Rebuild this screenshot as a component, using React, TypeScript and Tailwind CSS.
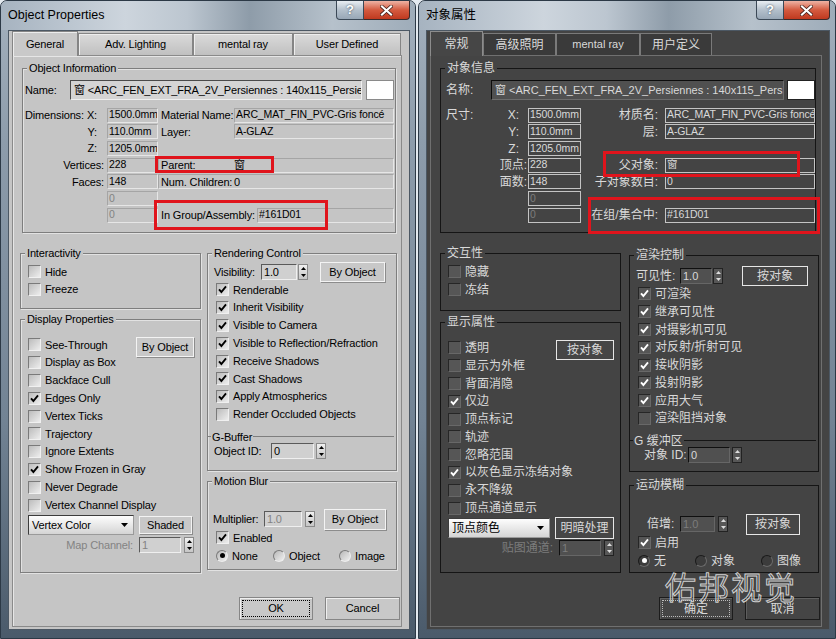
import React from "react";

const FONT = "font-['Liberation_Sans','Noto_Sans_CJK_SC',sans-serif]";

const LIGHT = {
  dark: false,
  winW: "w-[416px]",
  client: "bg-[#c5c5c5] text-[#000000] text-[11px] tracking-[-0.15px]",
  bg: "bg-[#c5c5c5]",
  dim: "text-[#838383]",
  group: "border border-[#7e7e7e] shadow-[inset_1px_1px_0_#e2e2e2,1px_1px_0_#e2e2e2]",
  line: "bg-[#7e7e7e]",
  panel: "border border-[#8a8a8a] shadow-[inset_1px_1px_0_#e6e6e6]",
  tabOn: "h-[25px] bg-[#c9c9c9] border border-b-0 border-[#858585] shadow-[inset_1px_1px_0_#ededed]",
  tabOff: "h-[22px] bg-[linear-gradient(#dadada,#c0c0c0)] border border-b-0 border-[#858585] shadow-[inset_1px_1px_0_#ededed]",
  info: "border border-[#e6e6e6] border-t-[#a5a5a5] border-l-[#a5a5a5]",
  name: "w-[292px] bg-[#d4d4d4] border border-[#4a4a4a] border-b-[#efefef] border-r-[#efefef]",
  nameLabel: "w-[47px] pl-[2px]",
  swatch: "ml-[4px] bg-[#ffffff] border border-[#8a8a8a]",
  c1: "w-[84px] pl-[2px]",
  axPad: "pr-[10px]",
  cntPad: "pr-[3px]",
  box: "bg-[linear-gradient(135deg,#bcbcbc,#ededed)] border border-[#7a7a7a] border-b-[#f0f0f0] border-r-[#f0f0f0]",
  mark: "#000000",
  radio: "bg-[linear-gradient(135deg,#b8b8b8,#f0f0f0)] border border-[#7a7a7a] border-b-[#eeeeee] border-r-[#eeeeee]",
  dot: "bg-[#000000]",
  btn: "bg-[#c8c8c8] border border-[#f3f3f3] shadow-[1px_1px_0_#8c8c8c]",
  spin: "bg-[#d0d0d0] border border-[#5a5a5a] border-b-[#efefef] border-r-[#efefef]",
  arrows: "bg-[linear-gradient(#f0f0f0,#c6c6c6)] border border-[#8a8a8a]",
  arrowColor: "#000000",
  big: "bg-[#c8c8c8] border border-[#868686] shadow-[inset_1px_1px_0_#efefef]",
  focus: "outline outline-1 outline-dotted outline-offset-[-4px] outline-[#000000]",
  red1: "left-[132px] top-[87px] w-[119px] h-[17px]",
  red2: "left-[131px] top-[131px] w-[174px] h-[30px]",
  colL: "ml-[7px]",
  colR: "ml-[6px]",
  interH: "h-[56px]",
  dispBox: "mt-[10px] h-[254px]",
  renderBox: "h-[218px] pt-[9px]",
  blurBox: "mt-[10px] h-[89px] pt-[27px]",
  shaded: "w-[53px] h-[18px]",
  visLabel: "w-[47px]",
  visField: "w-[36px]",
  visBtn: "ml-[12px] w-[65px]",
  idRow: "pl-[6px]",
  idLabel: "w-[57px]",
  idField: "w-[43px]",
  multRow: "pl-[5px]",
  multLabel: "w-[51px]",
  multField: "w-[38px]",
  multBtn: "ml-[9px] w-[62px]",
};

type Theme = typeof LIGHT;

const DARK: Theme = {
  dark: true,
  winW: "w-[418px]",
  client: "bg-[#444444] text-[#d9d9d9] text-[12px]",
  bg: "bg-[#444444]",
  dim: "text-[#7c7c7c]",
  group: "border border-[#151515]",
  line: "bg-[#151515]",
  panel: "border border-[#707070]",
  tabOn: "h-[25px] bg-[#464646] border border-b-0 border-[#8c8c8c]",
  tabOff: "h-[22px] bg-[#3a3a3a] border border-b-0 border-[#7a7a7a]",
  info: "border border-[#c4c4c4]",
  name: "w-[293px] bg-[#505050] border border-[#0c0c0c] border-b-[#6c6c6c] border-r-[#6c6c6c]",
  nameLabel: "w-[50px] pl-[5px]",
  swatch: "ml-[3px] bg-[#ffffff] border border-[#222222]",
  c1: "w-[87px] pl-[5px]",
  axPad: "pr-[9px]",
  cntPad: "pr-[1px]",
  box: "bg-[#565656] border border-[#262626] border-b-[#686868] border-r-[#686868]",
  mark: "#ffffff",
  radio: "bg-[#3c3c3c] border border-[#1a1a1a] border-b-[#6a6a6a] border-r-[#6a6a6a]",
  dot: "bg-[#ffffff]",
  btn: "bg-[#464646] border border-[#e6e6e6]",
  spin: "bg-[#505050] border border-[#101010] border-b-[#666666] border-r-[#666666]",
  arrows: "bg-[#575757] border border-[#222222]",
  arrowColor: "#dddddd",
  big: "bg-[#454545] border border-[#1c1c1c] shadow-[inset_1px_1px_0_#5e5e5e]",
  focus: "outline outline-1 outline-dotted outline-offset-[-4px] outline-[#bbbbbb]",
  red1: "left-[162px] top-[82px] w-[197px] h-[26px]",
  red2: "left-[147px] top-[128px] w-[232px] h-[37px]",
  colL: "ml-[9px]",
  colR: "ml-[8px]",
  interH: "h-[58px]",
  dispBox: "mt-[11px] h-[251px]",
  renderBox: "mt-[2px] h-[217px] pt-[11px]",
  blurBox: "mt-[13px] h-[88px] pt-[28px]",
  shaded: "w-[59px] h-[22px]",
  visLabel: "w-[44px]",
  visField: "w-[32px]",
  visBtn: "ml-[19px] w-[66px]",
  idRow: "pl-[14px]",
  idLabel: "w-[44px]",
  idField: "w-[42px]",
  multRow: "pl-[17px]",
  multLabel: "w-[33px]",
  multField: "w-[35px]",
  multBtn: "ml-[18px] w-[54px]",
};

const EN = {
  title: "Object Properties",
  tabs: [
    { label: "General", w: "w-[66px]" },
    { label: "Adv. Lighting", w: "w-[115px]" },
    { label: "mental ray", w: "w-[100px]" },
    { label: "User Defined", w: "w-[108px]" },
  ],
  info: "Object Information",
  name: "Name:",
  dims: "Dimensions:",
  mat: "Material Name:",
  layer: "Layer:",
  verts: "Vertices:",
  faces: "Faces:",
  parent: "Parent:",
  kids: "Num. Children:",
  group: "In Group/Assembly:",
  inter: "Interactivity",
  hide: "Hide",
  freeze: "Freeze",
  disp: "Display Properties",
  dispItems: ["See-Through", "Display as Box", "Backface Cull", "Edges Only", "Vertex Ticks", "Trajectory", "Ignore Extents", "Show Frozen in Gray", "Never Degrade", "Vertex Channel Display"],
  byObj: "By Object",
  vc: "Vertex Color",
  shaded: "Shaded",
  mapCh: "Map Channel:",
  render: "Rendering Control",
  vis: "Visibility:",
  renderItems: ["Renderable", "Inherit Visibility", "Visible to Camera", "Visible to Reflection/Refraction", "Receive Shadows", "Cast Shadows", "Apply Atmospherics", "Render Occluded Objects"],
  gbuf: "G-Buffer",
  objId: "Object ID:",
  mblur: "Motion Blur",
  mult: "Multiplier:",
  enabled: "Enabled",
  radios: ["None", "Object", "Image"],
  ok: "OK",
  cancel: "Cancel",
};

type Strings = typeof EN;

const CN: Strings = {
  title: "对象属性",
  tabs: [
    { label: "常规", w: "w-[53px]" },
    { label: "高级照明", w: "w-[73px]" },
    { label: "mental ray", w: "w-[84px]" },
    { label: "用户定义", w: "w-[72px]" },
  ],
  info: "对象信息",
  name: "名称:",
  dims: "尺寸:",
  mat: "材质名:",
  layer: "层:",
  verts: "顶点:",
  faces: "面数:",
  parent: "父对象:",
  kids: "子对象数目:",
  group: "在组/集合中:",
  inter: "交互性",
  hide: "隐藏",
  freeze: "冻结",
  disp: "显示属性",
  dispItems: ["透明", "显示为外框", "背面消隐", "仅边", "顶点标记", "轨迹", "忽略范围", "以灰色显示冻结对象", "永不降级", "顶点通道显示"],
  byObj: "按对象",
  vc: "顶点颜色",
  shaded: "明暗处理",
  mapCh: "贴图通道:",
  render: "渲染控制",
  vis: "可见性:",
  renderItems: ["可渲染", "继承可见性", "对摄影机可见", "对反射/折射可见", "接收阴影", "投射阴影", "应用大气", "渲染阻挡对象"],
  gbuf: "G 缓冲区",
  objId: "对象 ID:",
  mblur: "运动模糊",
  mult: "倍增:",
  enabled: "启用",
  radios: ["无", "对象", "图像"],
  ok: "确定",
  cancel: "取消",
};

const DISP_ON = [false, false, false, true, false, false, false, true, false, false];
const RENDER_ON = [true, true, true, true, true, true, true, false];

function Group({ t, label, cls, children }: { t: Theme; label: string; cls: string; children?: React.ReactNode }) {
  return (
    <div className={`relative ${t.group} ${cls}`}>
      <span className={`absolute left-[4px] top-[-8px] px-[2px] leading-[14px] whitespace-nowrap ${t.bg}`}>{label}</span>
      {children}
    </div>
  );
}

function Check({ t, on, label }: { t: Theme; on?: boolean; label: string }) {
  return (
    <div className="flex items-center h-[17.8px]">
      <span className={`w-[13px] h-[13px] shrink-0 flex items-center justify-center ${t.box}`}>
        {on && (
          <svg width="9" height="9" viewBox="0 0 9 9">
            <path d="M1 4.3 3.4 7 8 1.4" fill="none" stroke={t.mark} strokeWidth="1.9" />
          </svg>
        )}
      </span>
      <span className="ml-[4px] whitespace-nowrap">{label}</span>
    </div>
  );
}

function Radio({ t, on, label, w }: { t: Theme; on?: boolean; label: string; w?: string }) {
  return (
    <div className={`flex items-center ${w ?? ""}`}>
      <span className={`w-[12px] h-[12px] rounded-full shrink-0 flex items-center justify-center ${t.radio}`}>
        {on && <span className={`w-[5px] h-[5px] rounded-full ${t.dot}`} />}
      </span>
      <span className="ml-[4px] whitespace-nowrap">{label}</span>
    </div>
  );
}

function Btn({ t, cls, children }: { t: Theme; cls: string; children: React.ReactNode }) {
  return <div className={`flex items-center justify-center shrink-0 whitespace-nowrap ${t.btn} ${cls}`}>{children}</div>;
}

function Spinner({ t, value, w, gap, disabled }: { t: Theme; value: string; w: string; gap: string; disabled?: boolean }) {
  return (
    <div className="flex items-center">
      <div className={`h-[16px] ${w} flex items-center px-[2px] text-[11px] ${t.spin} ${disabled ? t.dim : ""}`}>{value}</div>
      <div className={`${gap} w-[10px] h-[16px] flex flex-col items-center justify-around ${t.arrows}`}>
        <svg width="5" height="3" viewBox="0 0 5 3">
          <path d="M2.5 0 5 3H0z" fill={t.arrowColor} />
        </svg>
        <svg width="5" height="3" viewBox="0 0 5 3">
          <path d="M0 0h5L2.5 3z" fill={t.arrowColor} />
        </svg>
      </div>
    </div>
  );
}

function Field({ t, w, dim, children }: { t: Theme; w: string; dim?: boolean; children?: React.ReactNode }) {
  return (
    <div className={`${w} h-[15px] shrink-0 flex items-center pl-[1px] text-[10.5px] tracking-[-0.1px] whitespace-nowrap overflow-hidden ${t.info} ${dim ? t.dim : ""}`}>
      {children}
    </div>
  );
}

type Row = { ax?: string; cnt?: boolean; v: string; dim?: boolean; l2?: string; v2?: string; kind?: "wide" | "grp" };

function InfoRows({ t, s }: { t: Theme; s: Strings }) {
  const rows: Row[] = [
    { ax: "X:", v: "1500.0mm", l2: s.mat, v2: "ARC_MAT_FIN_PVC-Gris foncé" },
    { ax: "Y:", v: "110.0mm", l2: s.layer, v2: "A-GLAZ" },
    { ax: "Z:", v: "1205.0mm" },
    { ax: s.verts, cnt: true, v: "228", l2: s.parent, v2: "窗", kind: "wide" },
    { ax: s.faces, cnt: true, v: "148", l2: s.kids, v2: "0", kind: "wide" },
    { v: "0", dim: true },
    { v: "0", dim: true, l2: s.group, v2: "#161D01", kind: "grp" },
  ];
  return (
    <div className="mt-[7px]">
      {rows.map((r, i) => (
        <div key={i} className="flex items-center h-[16.67px]">
          <div className={`${t.c1} ${r.cnt ? t.cntPad : t.axPad} h-full flex items-center justify-between whitespace-nowrap`}>
            <span>{i === 0 ? s.dims : ""}</span>
            <span>{r.ax ?? ""}</span>
          </div>
          <Field t={t} w={t.dark ? "w-[53px]" : "w-[51px]"} dim={r.dim}>
            {r.v}
          </Field>
          {r.l2 && !t.dark && r.kind === "wide" && (
            <div className={`w-[236px] h-[15px] flex items-center ${t.info}`}>
              <span className="w-[75px] pl-[2px] whitespace-nowrap">{r.l2}</span>
              <span className="text-[11px]">{r.v2}</span>
            </div>
          )}
          {r.l2 && !t.dark && r.kind === "grp" && (
            <>
              <span className="w-[99px] pl-[3px] whitespace-nowrap">{r.l2}</span>
              <Field t={t} w="w-[137px]">{r.v2}</Field>
            </>
          )}
          {r.l2 && !t.dark && !r.kind && (
            <>
              <span className="w-[76px] pl-[3px] whitespace-nowrap">{r.l2}</span>
              <Field t={t} w="w-[160px]">{r.v2}</Field>
            </>
          )}
          {r.l2 && t.dark && (
            <>
              <span className="w-[84px] pr-[7px] text-right whitespace-nowrap">{r.l2}</span>
              <Field t={t} w="w-[150px]">{r.v2}</Field>
            </>
          )}
        </div>
      ))}
    </div>
  );
}

function Dialog({ t, s }: { t: Theme; s: Strings }) {
  return (
    <div className={`relative flex flex-col ${t.winW} h-[639px] shrink-0 rounded-t-[7px] border border-[#2c3946] bg-[linear-gradient(180deg,#a4b1be_0px,#8d9cab_140px,#728394_420px,#4a5a6a_639px)]`}>
      {/* title bar */}
      <div className="flex h-[29px] rounded-t-[6px] bg-[linear-gradient(90deg,#a6b3c0_0%,#cdd5dd_30%,#bcc6d0_45%,#8e9ca9_60%,#b6c1cb_80%,#9eacb9_100%)]">
        <span className="pl-[7px] pt-[7px] text-[12.5px] leading-[15px] text-[#000000] whitespace-nowrap">{s.title}</span>
        <div className="ml-auto mr-[5px] flex">
          <div className="w-[28px] h-[19px] rounded-bl-[4px] border border-t-0 border-[#3b4856] bg-[linear-gradient(#e8edf2,#b4c0cc_50%,#98a7b6)] flex items-center justify-center text-[13px] font-bold text-[#ffffff] [text-shadow:0_0_2px_#2b3a4a]">
            ?
          </div>
          <div className="w-[46px] h-[19px] rounded-br-[4px] border border-t-0 border-l-0 border-[#3b2a2a] bg-[linear-gradient(#eeb3a4,#d45a3f_50%,#c0391f)] flex items-center justify-center">
            <svg width="13" height="11" viewBox="0 0 13 11">
              <path d="M2 1.5 11 9.5M11 1.5 2 9.5" stroke="#3d1a14" strokeWidth="3.6" strokeLinecap="square" />
              <path d="M2 1.5 11 9.5M11 1.5 2 9.5" stroke="#ffffff" strokeWidth="2.2" strokeLinecap="square" />
            </svg>
          </div>
        </div>
      </div>

      {/* client */}
      <div className={`flex-1 ml-[7px] mr-[5px] mb-[8px] flex flex-col border border-[#4c5864] pl-[3px] pr-[7px] pb-[2px] ${t.client}`}>
        {/* tabs */}
        <div className="flex items-end h-[24px]">
          {s.tabs.map((tab, i) => (
            <div
              key={tab.label}
              className={`${tab.w} flex items-center justify-center whitespace-nowrap ${i === 0 ? `${t.tabOn} relative z-10 -mb-px` : t.tabOff} ${tab.label === "mental ray" ? "text-[11px]" : ""}`}
            >
              {tab.label}
            </div>
          ))}
        </div>

        {/* tab page */}
        <div className={`flex-1 flex flex-col ${t.panel}`}>
          {/* object information */}
          <Group t={t} label={s.info} cls="mt-[12px] ml-[9px] mr-[5px] h-[165px]">
            <div className="flex items-center h-[20px] mt-[11px]">
              <span className={`${t.nameLabel} whitespace-nowrap`}>{s.name}</span>
              <div className={`${t.name} h-[20px] flex items-center px-[3px] overflow-hidden whitespace-nowrap text-[11px]`}>
                窗 &lt;ARC_FEN_EXT_FRA_2V_Persiennes : 140x115_Persiennes
              </div>
              <div className={`w-[28px] h-[20px] ${t.swatch}`} />
            </div>
            <InfoRows t={t} s={s} />
            <div className={`absolute border-[3px] border-[#e0141c] ${t.red1}`} />
            <div className={`absolute border-[3px] border-[#e0141c] ${t.red2}`} />
          </Group>

          <div className="flex mt-[20px]">
            {/* left column */}
            <div className={`${t.colL} w-[181px] flex flex-col`}>
              <Group t={t} label={s.inter} cls={`${t.interH} pt-[9px] pl-[7px]`}>
                <Check t={t} label={s.hide} />
                <Check t={t} label={s.freeze} />
              </Group>
              <Group t={t} label={s.disp} cls={`${t.dispBox} pt-[16px] pl-[7px] pr-[6px]`}>
                <div className="flex items-center justify-between h-[17.8px]">
                  <Check t={t} on={DISP_ON[0]} label={s.dispItems[0]} />
                  <Btn t={t} cls="w-[58px] h-[20px] translate-y-[2px]">
                    {s.byObj}
                  </Btn>
                </div>
                {s.dispItems.slice(1).map((d, i) => (
                  <Check key={d} t={t} on={DISP_ON[i + 1]} label={d} />
                ))}
                <div className="flex items-center mt-[1px] h-[20px]">
                  <div className="flex items-center justify-between h-[20px] w-[106px] pl-[3px] pr-[5px] text-[#000000] bg-[linear-gradient(#fdfdfd,#d4d4d4)] border border-[#3c3c3c] border-b-[#9a9a9a] border-r-[#9a9a9a]">
                    <span className="whitespace-nowrap">{s.vc}</span>
                    <svg width="7" height="4" viewBox="0 0 7 4">
                      <path d="M0 0h7L3.5 4z" fill="#000000" />
                    </svg>
                  </div>
                  <Btn t={t} cls={`ml-[5px] ${t.shaded}`}>
                    {s.shaded}
                  </Btn>
                </div>
                <div className="flex items-center mt-[2px] h-[17px]">
                  <span className={`w-[105px] text-right whitespace-nowrap ${t.dim}`}>{s.mapCh}</span>
                  <div className="ml-[6px]">
                    <Spinner t={t} value="1" w="w-[42px]" gap="ml-[3px]" disabled />
                  </div>
                </div>
              </Group>
            </div>

            {/* right column */}
            <div className={`${t.colR} w-[190px] flex flex-col`}>
              <Group t={t} label={s.render} cls={t.renderBox}>
                <div className="flex items-center h-[18px] pl-[6px]">
                  <span className={`${t.visLabel} whitespace-nowrap`}>{s.vis}</span>
                  <Spinner t={t} value="1.0" w={t.visField} gap="ml-[1px]" />
                  <Btn t={t} cls={`${t.visBtn} h-[20px]`}>
                    {s.byObj}
                  </Btn>
                </div>
                <div className="pl-[8px]">
                  {s.renderItems.map((d, i) => (
                    <Check key={d} t={t} on={RENDER_ON[i]} label={d} />
                  ))}
                </div>
                <div className="mt-[7px] flex items-center h-[13px] pr-[2px]">
                  <div className={`w-[3px] h-px ${t.line}`} />
                  <span className="px-[1px] whitespace-nowrap">{s.gbuf}</span>
                  <div className={`flex-1 h-px ${t.line}`} />
                </div>
                <div className={`flex items-center h-[16px] ${t.idRow}`}>
                  <span className={`${t.idLabel} whitespace-nowrap`}>{s.objId}</span>
                  <Spinner t={t} value="0" w={t.idField} gap="ml-[2px]" />
                </div>
              </Group>
              <Group t={t} label={s.mblur} cls={t.blurBox}>
                <div className={`flex items-center h-[20px] ${t.multRow}`}>
                  <span className={`${t.multLabel} whitespace-nowrap`}>{s.mult}</span>
                  <Spinner t={t} value="1.0" w={t.multField} gap="ml-[3px]" disabled />
                  <Btn t={t} cls={`${t.multBtn} h-[21px]`}>
                    {s.byObj}
                  </Btn>
                </div>
                <div className="pl-[8px]">
                  <Check t={t} on label={s.enabled} />
                </div>
                <div className="flex items-center h-[18px] pl-[8px]">
                  <Radio t={t} on label={s.radios[0]} w="w-[57px]" />
                  <Radio t={t} label={s.radios[1]} w="w-[66px]" />
                  <Radio t={t} label={s.radios[2]} />
                </div>
              </Group>
            </div>
          </div>

          <div className="flex justify-end gap-[12px] mt-[24px] mr-[1px]">
            <div className={`w-[74px] h-[23px] flex items-center justify-center ${t.big} ${t.focus}`}>{s.ok}</div>
            <div className={`w-[75px] h-[23px] flex items-center justify-center ${t.big}`}>{s.cancel}</div>
          </div>
        </div>
      </div>

      {t.dark && (
        <span className="absolute left-[246px] top-[570px] text-[31px] leading-[36px] tracking-[2px] text-transparent [-webkit-text-stroke:1px_#d0d0d0] whitespace-nowrap pointer-events-none">
          佑邦视觉
        </span>
      )}
    </div>
  );
}

export default function App() {
  return (
    <div className={`flex gap-[2px] w-[836px] h-[639px] overflow-hidden bg-[#e4eaf0] ${FONT}`}>
      <Dialog t={LIGHT} s={EN} />
      <Dialog t={DARK} s={CN} />
    </div>
  );
}
